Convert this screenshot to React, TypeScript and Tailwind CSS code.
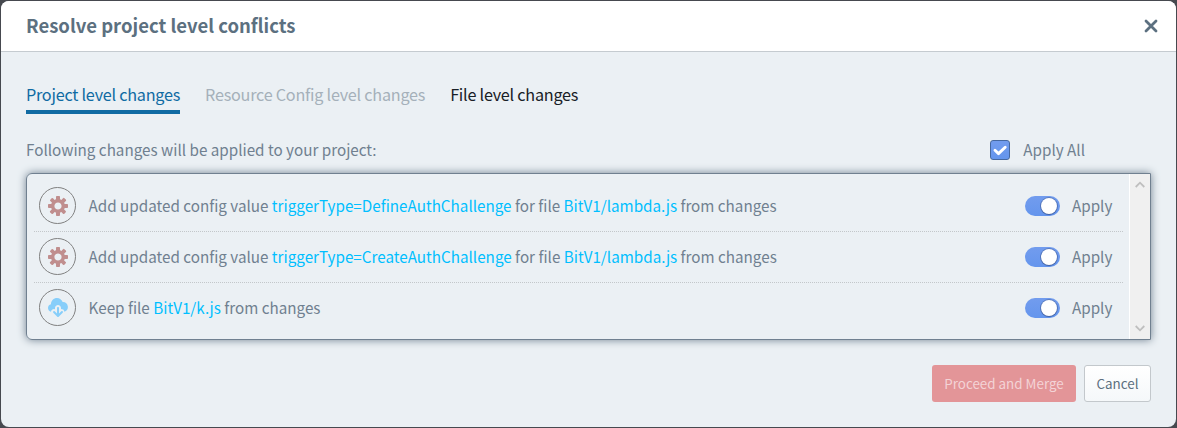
import type { ReactNode } from "react";

function GearIcon() {
  return (
    <svg width="20" height="20" viewBox="0 0 20 20" className="fill-[#c08e8e]">
      <path d="M19 8h-2.31c-.14-.46-.33-.89-.56-1.3l1.7-1.7a.996.996 0 000-1.41l-1.41-1.41a.996.996 0 00-1.41 0l-1.7 1.7c-.41-.22-.84-.41-1.3-.55V1c0-.55-.45-1-1-1H9c-.55 0-1 .45-1 1v2.33c-.48.14-.94.34-1.37.58L5 2.28a.972.972 0 00-1.36 0L2.28 3.64c-.37.38-.37.99 0 1.36L3.9 6.62c-.24.44-.44.89-.59 1.38H1c-.55 0-1 .45-1 1v2c0 .55.45 1 1 1h2.31c.14.46.33.89.56 1.3l-1.7 1.7a.996.996 0 000 1.41l1.41 1.41c.39.39 1.02.39 1.41 0l1.7-1.7c.41.22.84.41 1.3.55V19c0 .55.45 1 1 1h2c.55 0 1-.45 1-1v-2.33c.48-.14.94-.35 1.37-.59L15 17.72c.37.37.98.37 1.36 0l1.36-1.36c.37-.37.37-.98 0-1.36l-1.62-1.62c.24-.43.45-.89.6-1.38H19c.55 0 1-.45 1-1V9c0-.55-.45-1-1-1zm-9 5.6c-1.99 0-3.6-1.61-3.6-3.6s1.61-3.6 3.6-3.6 3.6 1.61 3.6 3.6-1.61 3.6-3.6 3.6z" />
    </svg>
  );
}

function CloudDownloadIcon() {
  return (
    <svg width="20" height="20" viewBox="0 0 20 20" className="fill-[#87cefa]">
      <path d="M15 4c-.12 0-.24.03-.36.04C13.83 1.69 11.62 0 9 0 5.69 0 3 2.69 3 6c0 .05.01.09.01.14A3.98 3.98 0 000 10c0 1.85 1.26 3.41 2.97 3.86A3 3 0 017 11.17V10c0-1.66 1.34-3 3-3s3 1.34 3 3v1.17a3 3 0 013.4 2.58A5 5 0 0015 4z" />
      <path d="M14 13c-.28 0-.53.11-.71.29L11 15.59V10c0-.55-.45-1-1-1s-1 .45-1 1v5.59l-2.29-2.29A1.003 1.003 0 005.3 14.71l4 4c.18.18.43.29.7.29s.53-.11.71-.29l4-4A1.003 1.003 0 0014 13z" />
    </svg>
  );
}

function Switch() {
  return (
    <span className="flex h-5 w-[35px] justify-end rounded-full bg-linear-to-b from-[#729cee] to-[#6495ed] py-0.5 pr-[3px]">
      <span className="size-4 rounded-full bg-white shadow-[0_0_0_1px_rgba(16,22,50,0.25),0_1px_1px_rgba(16,22,50,0.2)]" />
    </span>
  );
}

function Row({ icon, children, last }: { icon: ReactNode; children: ReactNode; last?: boolean }) {
  return (
    <div className={last ? "flex h-[51px] items-center pb-px" : "flex h-[51px] items-center border-b border-dotted border-[#c3c7ca]"}>
      <span className="mb-px ml-[5px] flex size-[37px] items-center justify-center rounded-full border border-[#808080] pl-px">
        {icon}
      </span>
      <span className="ml-[12.5px] pb-0.5 text-[15.22px] leading-5">{children}</span>
      <span className="ml-auto">
        <Switch />
      </span>
      <span className="ml-3 w-[51px] pb-0.5 text-[15.22px] leading-5">Apply</span>
    </div>
  );
}

function Hl({ children }: { children: ReactNode }) {
  return <span className="text-[#00bfff]">{children}</span>;
}

export default function App() {
  return (
    <div className="h-[428px] w-[1177px] bg-[#46494f] p-px font-['Noto_Sans_CJK_SC',sans-serif] text-[#708090]">
      <div className="flex h-[426px] flex-col overflow-hidden rounded-lg bg-[#ebf0f4]">
        <header className="flex h-[51px] items-center justify-between border-b border-[#c5cbd0] bg-white pr-[18px] pl-[25px]">
          <h1 className="pb-0.5 text-[18.5px] leading-6 font-bold text-[#5c7080]">Resolve project level conflicts</h1>
          <svg width="14" height="14" viewBox="0 0 14 14" className="stroke-[#5c7080]">
            <path d="M2 2l10 10M12 2L2 12" strokeWidth="2.8" strokeLinecap="round" />
          </svg>
        </header>

        <nav className="mt-[28px] ml-[25px] flex h-[34px] gap-[25px] text-[16.2px] leading-[28px] tracking-[-0.24px]">
          <span className="border-b-4 border-[#106ba3] text-[#106ba3]">Project level changes</span>
          <span className="text-[#a5b0ba]">Resource Config level changes</span>
          <span className="text-[#182026]">File level changes</span>
        </nav>

        <div className="mt-[24px] flex h-6 items-center pr-[91px] pl-[25px] text-[15.22px] leading-5">
          <span className="pb-0.5">Following changes will be applied to your project:</span>
          <span className="ml-auto flex size-5 items-center justify-center rounded-[3px] border border-[#46689f] bg-linear-to-b from-[#729cee] to-[#6495ed]">
            <svg width="16" height="16" viewBox="0 0 16 16" className="shrink-0 fill-none stroke-white">
              <path d="M3 8.3l3.5 3.3L13.2 5.2" strokeWidth="2.9" strokeLinecap="round" strokeLinejoin="round" />
            </svg>
          </span>
          <span className="ml-[13px] pb-0.5">Apply All</span>
        </div>

        <div className="mx-[25px] mt-[11px] flex h-[167px] w-[1125px] overflow-hidden rounded-md rounded-r-none border border-[#708090] shadow-[0_0_8px_#708090]">
          <div className="w-[1102px] pt-[7px] pr-[6px] pl-[7px]">
            <Row icon={<GearIcon />}>
              Add updated config value <Hl>triggerType=DefineAuthChallenge</Hl> for file <Hl>BitV1/lambda.js</Hl> from changes
            </Row>
            <Row icon={<GearIcon />}>
              Add updated config value <Hl>triggerType=CreateAuthChallenge</Hl> for file <Hl>BitV1/lambda.js</Hl> from changes
            </Row>
            <Row icon={<CloudDownloadIcon />} last>
              Keep file <Hl>BitV1/k.js</Hl> from changes
            </Row>
          </div>
          <div className="flex flex-1 flex-col items-center justify-between border-l border-white bg-[#f0f0f0] py-[7px]">
            <svg width="10" height="7" viewBox="0 0 10 7" className="fill-none stroke-[#bfbfbf]">
              <path d="M.7 6L5 1.7 9.3 6" strokeWidth="1.8" />
            </svg>
            <svg width="10" height="7" viewBox="0 0 10 7" className="fill-none stroke-[#bfbfbf]">
              <path d="M.7 1L5 5.3 9.3 1" strokeWidth="1.8" />
            </svg>
          </div>
        </div>

        <footer className="mt-[25px] flex justify-end gap-2 pr-[25px] text-[13.4px]">
          <button className="h-[37px] w-[144px] rounded-[3px] bg-[#e39598] text-[#f3d3d6]">Proceed and Merge</button>
          <button className="h-[37px] w-[67px] rounded-[3px] border border-[#c3c8cc] bg-linear-to-b from-white to-[#f5f8fa] text-[#5c7080]">
            Cancel
          </button>
        </footer>
      </div>
    </div>
  );
}
